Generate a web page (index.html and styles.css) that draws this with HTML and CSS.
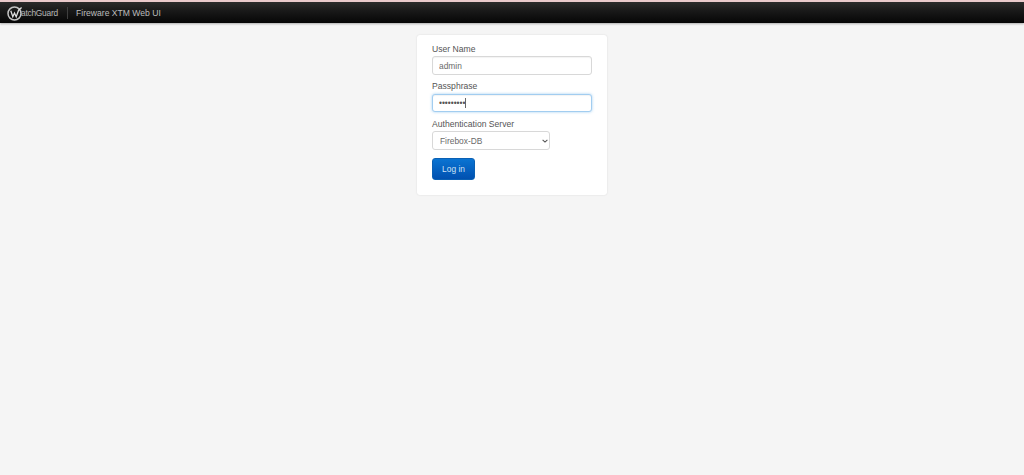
FILE: index.html
```html
<!DOCTYPE html>
<html lang="en">
<head>
<meta charset="utf-8">
<title>Fireware XTM Web UI</title>
<link rel="stylesheet" href="styles.css">
</head>
<body>
<header class="topbar">
  <div class="brand">
    <svg class="logo-mark" width="16" height="16" viewBox="0 0 16 16" aria-hidden="true">
      <circle cx="7.5" cy="8.5" r="6.5" fill="none" stroke="#c4c4c4" stroke-width="1.5"/>
      <path d="M3.8 5.8 L5.8 11.8 L7.5 8 L9.2 11.8 L11.6 5.2 L14.6 2.4" fill="none" stroke="#dedede" stroke-width="1.3"/>
    </svg>
    <span class="logo-text">atchGuard</span>
  </div>
  <span class="divider"></span>
  <span class="product">Fireware XTM Web UI</span>
</header>
<main class="page">
  <form class="card">
    <div class="field">
      <label class="label" for="user">User Name</label>
      <input class="input" id="user" type="text" value="admin">
    </div>
    <div class="field">
      <label class="label">Passphrase</label>
      <div class="input input-focus"><span class="dots">•••••••••</span><span class="caret"></span></div>
    </div>
    <div class="field">
      <label class="label" for="server">Authentication Server</label>
      <div class="select-wrap">
        <select class="select" id="server"><option>Firebox-DB</option></select>
        <svg class="chevron" width="6" height="4" viewBox="0 0 6 4" aria-hidden="true">
          <path d="M.6 .8 L3 3.1 L5.4 .8" fill="none" stroke="#555" stroke-width="1.1"/>
        </svg>
      </div>
    </div>
    <button class="button" type="button">Log in</button>
  </form>
</main>
</body>
</html>
```
FILE: styles.css
```css
* { box-sizing: border-box; }
html, body { height: 100%; }
body {
  margin: 0;
  background: #f5f5f5;
  font-family: "Liberation Sans", Arial, sans-serif;
  font-size: 8.4px;
  color: #555;
  overflow: hidden;
}
.topbar {
  height: 23px;
  display: flex;
  align-items: center;
  padding: 0 0 0 7px;
  border-top: 2px solid #e9c9cb;
  background: linear-gradient(#2b2b2b, #1b1b1b 35%, #060606);
  box-shadow: 0 1px 2px rgba(0,0,0,.3);
  margin-bottom: 12px;
}
.brand { display: flex; align-items: center; width: 54px; }
.logo-mark { flex: none; }
.logo-text {
  margin-left: -2px;
  font-size: 8.4px;
  letter-spacing: -.25px;
  color: #b8b8b8;
  white-space: nowrap;
}
.divider { width: 1px; height: 12px; margin: 0 8px 0 6px; background: #3f3f3f; }
.product { font-size: 8.6px; color: #bcbcbc; white-space: nowrap; }
.page { display: flex; justify-content: center; }
.card {
  width: 190px;
  height: 160px;
  padding: 8px 15px;
  background: #fff;
  border-radius: 3px;
  box-shadow: 0 0 2px rgba(0,0,0,.12);
}
.field { margin-bottom: 5.5px; }
.label { display: block; height: 12px; line-height: 12px; margin-bottom: 1.4px; font-size: 8.6px; color: #555; }
.input {
  display: flex;
  align-items: center;
  width: 160px;
  height: 18.6px;
  padding: 0 6px;
  border: 1px solid #d8d8d8;
  border-radius: 3px;
  background: #fff;
  font: 8.4px "Liberation Sans", Arial, sans-serif;
  color: #6a6a6a;
  outline: none;
  box-shadow: inset 0 1px 1px rgba(0,0,0,.05);
}
.input-focus {
  border-color: #a2cdf0;
  box-shadow: inset 0 1px 1px rgba(0,0,0,.05), 0 0 3px rgba(102,175,233,.6);
}
.dots { font-size: 8.4px; color: #555; }
.caret { width: 1px; height: 10px; margin-left: 0; background: #666; }
.select-wrap { position: relative; width: 117.5px; }
.select {
  display: block;
  width: 100%;
  height: 18.6px;
  padding: 0 7px;
  border: 1px solid #d8d8d8;
  border-radius: 3px;
  background: #fff;
  font: 8.4px "Liberation Sans", Arial, sans-serif;
  color: #6a6a6a;
  appearance: none;
}
.chevron { position: absolute; right: 2px; top: 7.5px; }
.button {
  display: block;
  width: 43px;
  height: 21.6px;
  margin-top: 8px;
  padding: 0;
  border: 1px solid #0a60b4;
  border-radius: 3px;
  background: linear-gradient(#0a74d2, #0050b0);
  font: 8.4px "Liberation Sans", Arial, sans-serif;
  color: #cfe2f5;
}
```
